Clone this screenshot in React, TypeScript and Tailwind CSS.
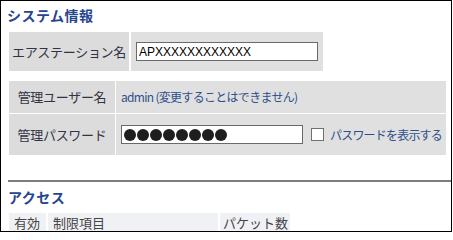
import React from 'react';

const labelCell =
  'bg-[#dcdcdc] flex items-center justify-center text-[13px] text-[#333344] tracking-[-0.3px]';

export default function App() {
  return (
    <div className="w-[452px] h-[232px] border border-black bg-white overflow-hidden font-['Noto_Sans_CJK_JP',sans-serif]">
      {/* システム情報 */}
      <h2 className="pl-[6px] pt-[4px] text-[14px] leading-[20px] font-bold text-[#25468f] tracking-[0.5px]">
        システム情報
      </h2>

      <div className="ml-[8px] mt-[7px] flex gap-[2px] h-[39px] w-[314px]">
        <div className={`${labelCell} w-[120px]`}>エアステーション名</div>
        <div className="flex-1 bg-[#e0e0e0] flex items-center pl-[5px]">
          <input
            readOnly
            value="APXXXXXXXXXXXX"
            className="w-[182px] h-[19px] border border-[#6a6a6a] bg-white px-[2px] text-[12px] text-black font-['Liberation_Sans',sans-serif] outline-none"
          />
        </div>
      </div>

      <div className="ml-[8px] mt-[10px] grid grid-cols-[106px_330px] gap-px">
        <div className={`${labelCell} h-[32px]`}>管理ユーザー名</div>
        <div className="bg-[#e0e0e0] flex items-center pl-[5px] text-[12px] text-[#2f4f8a] tracking-[-0.7px] whitespace-nowrap">
          admin (変更することはできません)
        </div>
        <div className={`${labelCell} h-[41px]`}>管理パスワード</div>
        <div className="bg-[#e0e0e0] flex items-center pl-[5px] whitespace-nowrap">
          <div className="w-[182px] h-[19px] border border-[#6a6a6a] bg-white flex items-center gap-[1px] pl-[2px] shrink-0">
            {Array.from({ length: 8 }).map((_, i) => (
              <span key={i} className="w-[12px] h-[12px] rounded-full bg-[#1e1e1e]" />
            ))}
          </div>
          <span className="ml-[8px] w-[13px] h-[13px] border border-[#707070] bg-white shrink-0" />
          <span className="ml-[6px] text-[12px] text-[#2f4f8a] tracking-[-0.8px]">
            パスワードを表示する
          </span>
        </div>
      </div>

      <div className="ml-[7px] mt-[25px] h-[2px] bg-[#7c7c7c]" />

      {/* アクセス */}
      <h2 className="pl-[7px] mt-[5px] text-[14px] leading-[20px] font-bold text-[#25468f] tracking-[0.5px]">
        アクセス
      </h2>

      <div className="ml-[8px] mt-[6px] flex gap-[2px] h-[19px] text-[13px] text-[#444444]">
        <div className="w-[37px] bg-[#f0f1f5] pl-[5px] leading-[19px]">有効</div>
        <div className="w-[170px] bg-[#f0f1f5] pl-[5px] leading-[19px]">制限項目</div>
        <div className="w-[70px] bg-[#f0f1f5] pl-[3px] leading-[19px]">パケット数</div>
      </div>
    </div>
  );
}
